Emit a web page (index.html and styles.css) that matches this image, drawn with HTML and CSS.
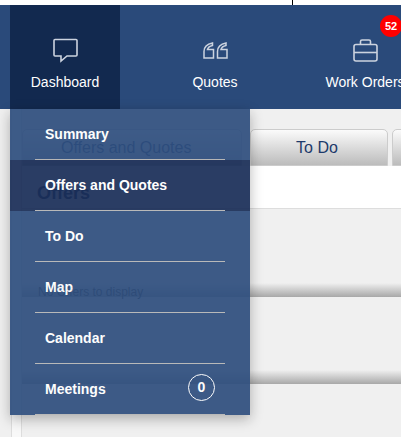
FILE: index.html
```html
<!DOCTYPE html>
<html lang="en">
<head>
  <meta charset="UTF-8">
  <meta name="viewport" content="width=device-width, initial-scale=1.0">
  <title>Dashboard</title>
  <link rel="stylesheet" href="styles.css">
</head>
<body>
  <div class="top-strip"><span class="top-tick"></span></div>

  <nav class="navbar">
    <a class="nav-item active">
      <span class="nav-icon">
        <svg width="25" height="25" viewBox="0 0 25 25" fill="none" stroke="currentColor" stroke-width="1.6">
          <path d="M2 1.5H23Q24 1.5 24 2.5V17Q24 18 23 18H14L8 23V18H2Q1 18 1 17V2.5Q1 1.5 2 1.5Z"/>
        </svg>
      </span>
      <span class="nav-label">Dashboard</span>
    </a>
    <a class="nav-item">
      <span class="nav-icon">
        <svg width="25" height="17" viewBox="0 0 25 17" fill="none" stroke="currentColor" stroke-width="1.5">
          <path d="M9.5 1C4.5 2 1 5 1 9.5V16H10.5V7.5H4.5C5 5.5 7 4 9.5 3.5Z"/>
          <path d="M23 1C18 2 14.5 5 14.5 9.5V16H24V7.5H18C18.5 5.5 20.5 4 23 3.5Z"/>
        </svg>
      </span>
      <span class="nav-label">Quotes</span>
    </a>
    <a class="nav-item">
      <span class="nav-icon">
        <svg width="25" height="23" viewBox="0 0 25 23" fill="none" stroke="currentColor" stroke-width="1.6">
          <rect x="1" y="5.5" width="23" height="16.5" rx="2"/>
          <path d="M1 13.5H24"/>
          <path d="M7.5 5.5V2.5Q7.5 1 9 1H16Q17.5 1 17.5 2.5V5.5"/>
        </svg>
      </span>
      <span class="nav-label">Work Orders</span>
      <span class="nav-badge">52</span>
    </a>
  </nav>

  <div class="page">
    <div class="side-strip"></div>
    <main class="content">
      <div class="tabs">
        <div class="tab tab-first">Offers and Quotes</div>
        <div class="tab tab-todo">To Do</div>
        <div class="tab tab-rest"></div>
      </div>
      <div class="panel-title">
        <h2>Offers</h2>
      </div>
      <section class="section section-first">
        <p>No Offers to display</p>
      </section>
      <section class="section"></section>
    </main>
  </div>

  <ul class="dropdown">
    <li><a>Summary</a></li>
    <li class="current"><a>Offers and Quotes</a></li>
    <li><a>To Do</a></li>
    <li><a>Map</a></li>
    <li><a>Calendar</a></li>
    <li><a>Meetings <span class="count">0</span></a></li>
  </ul>
</body>
</html>
```

FILE: styles.css
```css
html, body {
  margin: 0;
  padding: 0;
  height: 100%;
  overflow: hidden;
}
body {
  position: relative;
  background: #f0f0f0;
  font-family: "Liberation Sans", Arial, sans-serif;
}
.top-strip {
  height: 5px;
  background: #fff;
}
.top-tick {
  display: block;
  width: 1px;
  height: 5px;
  margin-left: 292px;
  background: #000;
}
.navbar {
  display: flex;
  gap: 40px;
  height: 104px;
  padding-left: 10px;
  background: #2a4a7a;
  overflow: hidden;
}
.nav-item {
  position: relative;
  flex: 0 0 110px;
  display: flex;
  flex-direction: column;
  align-items: center;
  color: #fff;
  white-space: nowrap;
}
.nav-item.active {
  background: #12294f;
}
.nav-icon {
  display: flex;
  align-items: center;
  justify-content: center;
  height: 30px;
  margin-top: 30px;
  color: #ccd3df;
}
.nav-label {
  margin-top: 9px;
  font-size: 14px;
  line-height: 16px;
}
.nav-badge {
  position: absolute;
  top: 10px;
  left: 70px;
  width: 22px;
  height: 22px;
  border-radius: 50%;
  background: #f00;
  font-size: 11px;
  font-weight: bold;
  line-height: 22px;
  text-align: center;
}
.page {
  display: flex;
  height: 328px;
  padding-left: 11px;
}
.side-strip {
  flex: 0 0 9px;
  background: #f8f8f8;
  border-left: 1px solid #ddd;
  border-right: 1px solid #ddd;
}
.content {
  flex: 1;
  min-width: 0;
}
.tabs {
  display: flex;
  gap: 4px;
  padding-top: 20px;
  overflow: hidden;
}
.tab {
  box-sizing: border-box;
  flex: none;
  height: 37px;
  border: 1px solid #ccc;
  border-radius: 5px 5px 0 0;
  background: linear-gradient(to bottom, #fbfbfb, #bcbcbc);
  color: #1d3a6b;
  font-size: 16px;
  line-height: 36px;
}
.tab-first {
  width: 220px;
  padding-left: 38px;
}
.tab-todo {
  width: 138px;
  margin-left: 4px;
  padding-right: 4px;
  text-align: center;
}
.tab-rest {
  width: 60px;
}
.panel-title {
  box-sizing: border-box;
  height: 43px;
  padding: 16px 0 0 15px;
  background: #fff;
  border-bottom: 1px solid #ddd;
}
.panel-title h2 {
  margin: 0;
  color: #1d3a6b;
  font-size: 18px;
  line-height: 22px;
}
.section {
  box-sizing: border-box;
  height: 87px;
  background: linear-gradient(to bottom, rgba(168, 168, 168, 0), #a8a8a8) no-repeat bottom / 100% 14px;
}
.section-first {
  height: 88px;
  padding: 76px 0 0 16px;
}
.section p {
  margin: 0;
  color: #333;
  font-size: 12px;
  line-height: 14px;
}
.dropdown {
  position: absolute;
  top: 109px;
  left: 10px;
  width: 240px;
  margin: 0;
  padding: 0;
  list-style: none;
  background: #2e4e7e;
  box-shadow: 0 4px 12px rgba(0, 0, 0, 0.3);
  opacity: 0.92;
}
.dropdown li {
  box-sizing: border-box;
  height: 51px;
  padding: 0 25px;
}
.dropdown li.current {
  background: #192d57;
}
.dropdown a {
  display: flex;
  align-items: center;
  justify-content: space-between;
  box-sizing: border-box;
  height: 51px;
  padding: 0 10px;
  border-bottom: 1px solid #b5b5b5;
  color: #fff;
  font-size: 14px;
  font-weight: bold;
}
.count {
  box-sizing: border-box;
  width: 27px;
  height: 27px;
  margin-bottom: 4px;
  border: 1px solid #fff;
  border-radius: 50%;
  font-size: 14px;
  line-height: 25px;
  text-align: center;
}
```
